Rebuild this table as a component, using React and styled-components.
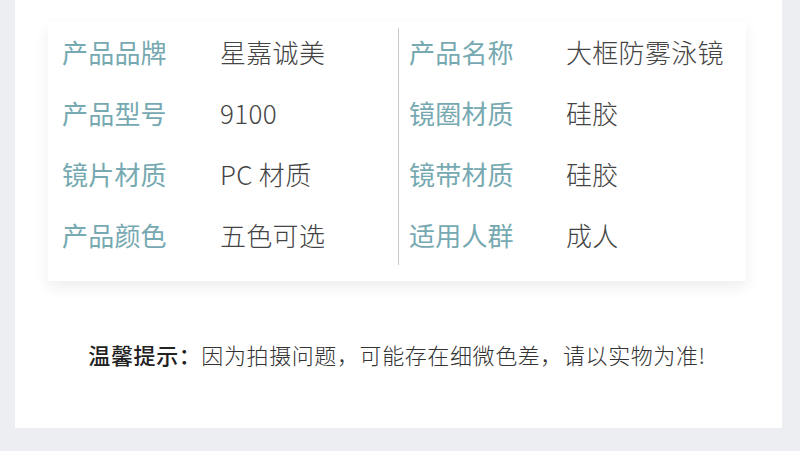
import React from "react";
import styled, { createGlobalStyle } from "styled-components";

const GlobalStyle = createGlobalStyle`
  body {
    margin: 0;
    background: #edeef2;
    font-family: "Noto Sans CJK SC", "Noto Sans", sans-serif;
  }
`;

const Page = styled.div`
  width: 800px;
  height: 451px;
  background: #edeef2;
  overflow: hidden;
`;

const Panel = styled.div`
  width: 767px;
  height: 428px;
  margin-left: 15px;
  background: #fff;
  padding-top: 22px;
  box-sizing: border-box;
`;

const Card = styled.div`
  margin-left: 33px;
  width: 698px;
  height: 259px;
  background: #fff;
  box-shadow: 0 6px 14px rgba(0, 0, 0, 0.07);
  display: flex;
`;

const Column = styled.div`
  width: ${(p) => p.$width}px;
  padding-left: ${(p) => p.$pad}px;
  box-sizing: border-box;
  display: grid;
  grid-template-rows: repeat(4, 61px);
  align-content: start;
`;

const Divider = styled.div`
  width: 1px;
  height: 237px;
  margin-top: 6px;
  background: #c9c9c9;
`;

const Row = styled.div`
  display: grid;
  grid-template-columns: ${(p) => p.$labelWidth}px 1fr;
  align-items: center;
  padding-bottom: 3px;
`;

const Label = styled.span`
  font-size: 26px;
  color: #76a9b1;
  letter-spacing: 0.2px;
`;

const Value = styled.span`
  font-size: 26px;
  color: #444;
  font-weight: 300;
  letter-spacing: 0.3px;
`;

const Notice = styled.p`
  margin: 57px 0 0;
  padding-right: 3px;
  text-align: center;
  font-size: 22px;
  color: #333;
  font-weight: 300;
  letter-spacing: 0.6px;
`;

const Strong = styled.span`
  font-weight: 500;
  color: #222;
`;

const left = [
  ["产品品牌", "星嘉诚美"],
  ["产品型号", "9100"],
  ["镜片材质", "PC 材质"],
  ["产品颜色", "五色可选"],
];

const right = [
  ["产品名称", "大框防雾泳镜"],
  ["镜圈材质", "硅胶"],
  ["镜带材质", "硅胶"],
  ["适用人群", "成人"],
];

export default function App() {
  return (
    <>
      <GlobalStyle />
      <Page>
        <Panel>
          <Card>
            <Column $width={350} $pad={14}>
              {left.map(([k, v]) => (
                <Row key={k} $labelWidth={158}>
                  <Label>{k}</Label>
                  <Value>{v}</Value>
                </Row>
              ))}
            </Column>
            <Divider />
            <Column $width={347} $pad={10}>
              {right.map(([k, v]) => (
                <Row key={k} $labelWidth={157}>
                  <Label>{k}</Label>
                  <Value>{v}</Value>
                </Row>
              ))}
            </Column>
          </Card>
          <Notice>
            <Strong>温馨提示：</Strong>因为拍摄问题，可能存在细微色差，请以实物为准!
          </Notice>
        </Panel>
      </Page>
    </>
  );
}
